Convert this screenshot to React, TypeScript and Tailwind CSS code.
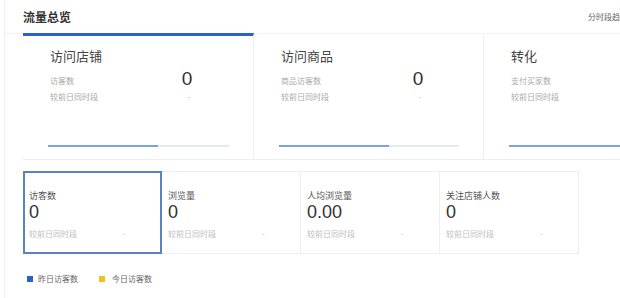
import React from "react";

type TopCard = {
  title: string;
  label: string;
  value: string;
  progress: number;
  active?: boolean;
};

type MetricCard = {
  label: string;
  value: string;
  selected?: boolean;
};

const topCards: TopCard[] = [
  {title: "访问店铺", label: "访客数", value: "0", progress: 61, active: true},
  {title: "访问商品", label: "商品访客数", value: "0", progress: 61},
  {title: "转化", label: "支付买家数", value: "", progress: 100},
];

const metrics: MetricCard[] = [
  {label: "访客数", value: "0", selected: true},
  {label: "浏览量", value: "0"},
  {label: "人均浏览量", value: "0.00"},
  {label: "关注店铺人数", value: "0"},
];

const numFont = {fontFamily: '"Liberation Sans", Arial, sans-serif'};

const TopCardView: React.FC<{card: TopCard}> = ({card}) => {
  return <div
    className={
      card.active
        ? "relative w-[231px] shrink-0 h-[127px] border-t-[3px] border-t-[#2a62c9] border-r border-b border-[#eceef1] pl-[27px] pr-[24px] pt-[11px]"
        : "relative w-[230px] shrink-0 h-[127px] border-t-[3px] border-t-transparent border-r border-b border-[#eceef1] pl-[27px] pr-[24px] pt-[11px]"
    }
  >
    <div className="text-[13px] leading-[18px] text-[#444]">{card.title}</div>
    <div className="flex mt-[8px]">
      <div className="w-[115px] text-[8px] leading-[16px] text-[#aaa]">
        <div>{card.label}</div>
        <div>较前日同时段</div>
      </div>
      {card.value ? <div className="w-[44px] flex flex-col items-center">
        <div className="text-[19px] leading-[18px] text-[#333] -mt-[3px]" style={numFont}>{card.value}</div>
        <div className="text-[8px] leading-[12px] text-[#bbb] ml-[4px] mt-[3px]">-</div>
      </div> : null}
    </div>
    <div className="absolute left-[25px] right-[24px] bottom-[12px] h-[2px] bg-[#e6e9ee]">
      <div className="h-full bg-[#7fa3d6]" style={{width: `${card.progress}%`}}/>
    </div>
  </div>;
};

const MetricView: React.FC<{metric: MetricCard}> = ({metric}) => {
  return <div
    className={
      metric.selected
        ? "w-[139px] h-[83px] shrink-0 border-2 border-[#5a80c6] pl-[4px] pt-[17px]"
        : "w-[139px] h-[83px] shrink-0 border border-l-0 border-[#eceef1] pl-[6px] pt-[18px]"
    }
  >
    <div className="text-[9px] leading-[12px] text-[#555]">{metric.label}</div>
    <div className="text-[18px] leading-[18px] text-[#333] mt-[1px]" style={numFont}>{metric.value}</div>
    <div className="flex text-[8px] leading-[12px] text-[#c0c0c0] mt-[7px]">
      <span className="w-[94px]">较前日同时段</span>
      <span>-</span>
    </div>
  </div>;
};

export default function App() {
  return <div
    className="w-[620px] h-[298px] overflow-hidden bg-white"
    style={{fontFamily: '"Noto Sans CJK SC", "Noto Sans", sans-serif'}}
  >
    <div className="ml-[4px] h-full border-l border-[#eef0f2]">
      <div className="flex items-center justify-between h-[34px] border-b border-[#f0f1f3] pl-[18px]">
        <div className="text-[12px] font-bold text-[#333]">流量总览</div>
        <div className="text-[8px] text-[#666] whitespace-nowrap w-[32px] overflow-hidden">分时段趋势</div>
      </div>
      <div className="flex pl-[18px] -mt-[1px]">
        {topCards.map(card => <TopCardView key={card.title} card={card}/>)}
      </div>
      <div className="flex pl-[18px] mt-[11px]">
        {metrics.map(m => <MetricView key={m.label} metric={m}/>)}
      </div>
      <div className="flex items-center pl-[22px] mt-[19px] text-[8px] text-[#666]">
        <span className="w-[6px] h-[6px] bg-[#2a62c9] mr-[5px]"/>
        <span className="w-[61px]">昨日访客数</span>
        <span className="w-[6px] h-[6px] bg-[#f2c21b] mr-[7px]"/>
        <span>今日访客数</span>
      </div>
    </div>
  </div>;
}
